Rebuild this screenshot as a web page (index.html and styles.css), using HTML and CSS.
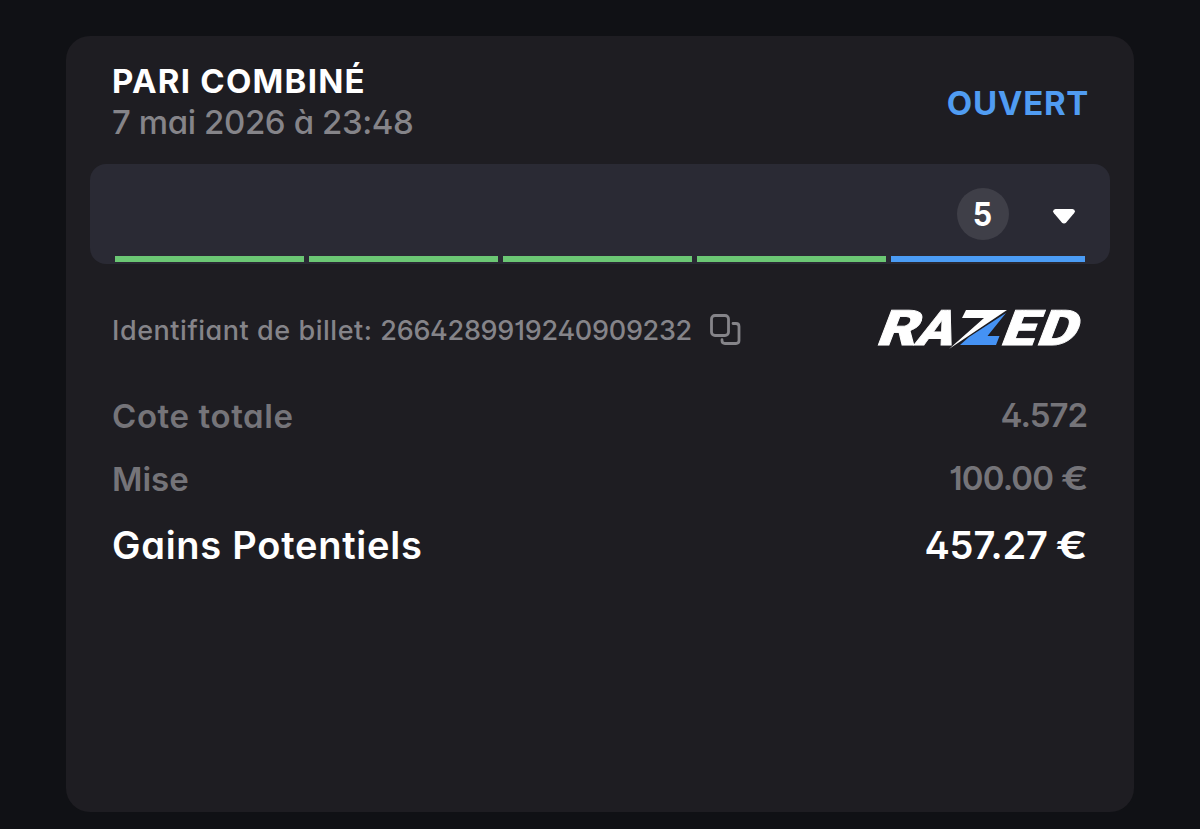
FILE: index.html
```html
<!DOCTYPE html>
<html lang="fr">
<head>
<meta charset="utf-8">
<title>Pari combiné</title>
<link rel="stylesheet" href="styles.css">
</head>
<body>
<main class="card">
  <header class="head">
    <div>
      <h1 class="title">PARI COMBINÉ</h1>
      <p class="date">7 mai 2026 à 23:48</p>
    </div>
    <div class="status">OUVERT</div>
  </header>
  <section class="panel">
    <div class="panel-row">
      <div class="count"><span class="count-num">5</span></div>
      <svg class="caret" width="24" height="17" viewBox="0 0 24 17"><path d="M3.500 1h17q3.800 1 1.500 4.300l-7.600 9q-2.400 2.400-4.800 0l-7.600-9q-2.300-3.300 1.500-4.300z"/></svg>
    </div>
    <div class="legs"><i class="leg"></i><i class="leg"></i><i class="leg"></i><i class="leg"></i><i class="leg open"></i></div>
  </section>
  <section class="ticket">
    <div class="ident">
      <p><span class="ident-label">Identifiant de billet: </span><span class="ident-num">2664289919240909232</span></p>
      <svg class="copy" width="34" height="34" viewBox="0 0 34 34"><rect x="2.500" y="2.500" width="17" height="20" rx="3.500"/><path d="M24 10.500h3q3 0 3 3v14q0 3-3 3H16q-3 0-3-3v-.8"/></svg>
    </div>
    <svg class="logo" width="212" height="50" viewBox="0 0 212 50" role="img" aria-label="RAZED">
      <g class="logo-text" transform="translate(0 40) skewX(-21)">
        <text x="1" y="0" textLength="40" lengthAdjust="spacingAndGlyphs">R</text>
        <text x="40" y="0" textLength="37" lengthAdjust="spacingAndGlyphs">A</text>
        <text x="125" y="0" textLength="34" lengthAdjust="spacingAndGlyphs">E</text>
        <text x="161" y="0" textLength="39" lengthAdjust="spacingAndGlyphs">D</text>
      </g>
      <path class="bolt" d="M92 5h41L75 44L110 13H88z"/>
      <path class="wedge" d="M132 8L113.500 31h12l-3.500 9H86l9-8z"/>
    </svg>
  </section>
  <dl class="totals">
    <div class="row"><dt class="wide">Cote totale</dt><dd>4.572</dd></div>
    <div class="row"><dt>Mise</dt><dd class="stake">100.00 <span class="euro">€</span></dd></div>
    <div class="row win"><dt>Gains Potentiels</dt><dd>457.27 <span class="euro">€</span></dd></div>
  </dl>
</main>
</body>
</html>
```
FILE: styles.css
```css
* { box-sizing: border-box; margin: 0; padding: 0; }
body {
  height: 829px;
  padding: 36px 66px 17px;
  background: #101115;
  color: #fff;
  font-family: Inter, "Liberation Sans", sans-serif;
  font-feature-settings: "cv11", "cv01", "cv02";
}
.card {
  height: 776px;
  padding: 24px;
  background: #1e1d22;
  border-radius: 24px;
}
.head {
  display: flex;
  justify-content: space-between;
  align-items: flex-start;
  height: 104px;
  padding: 0 22px;
}
.title { font-size: 33px; line-height: 42px; font-weight: 650; letter-spacing: 1.25px; }
.date { font-size: 33px; line-height: 40px; font-weight: 480; letter-spacing: -.4px; color: #858489; }
.status { padding-top: 22px; margin-right: -1px; font-size: 33px; line-height: 42px; font-weight: 650; letter-spacing: .7px; color: #509cf2; }
.panel {
  display: flex;
  flex-direction: column;
  justify-content: space-between;
  height: 100px;
  padding: 24px 24px 2px;
  background: #2a2a34;
  border-radius: 16px;
}
.panel-row { display: flex; justify-content: flex-end; align-items: center; gap: 43px; padding-right: 10px; }
.count {
  width: 52px;
  height: 52px;
  border-radius: 50%;
  background: #3f3f48;
  font-size: 33px;
  line-height: 53px;
  font-weight: 700;
  text-align: center;
}
.count-num { display: inline-block; transform: scaleX(.92); }
.caret { margin-top: 4px; fill: #fff; }
.legs { display: flex; height: 6px; padding-right: 1px; margin-left: .5px; }
.leg { flex: 1; margin-right: 5px; background: #6bc774; }
.leg.open { flex: 1 0 5px; margin-right: 0; background: #4b9cf5; }
.ticket {
  display: flex;
  justify-content: space-between;
  align-items: center;
  height: 132px;
  padding: 0 24px 0 22px;
}
.ident { display: flex; align-items: center; gap: 17px; font-size: 27px; font-weight: 480; color: #858489; }
.ident p { white-space: nowrap; }
.ident-label { letter-spacing: .54px; }
.ident-num { letter-spacing: -.28px; }
.copy { fill: none; stroke: #858489; stroke-width: 2.8; stroke-linecap: round; }
.logo { overflow: visible; }
.logo-text { fill: #fff; stroke: #fff; stroke-width: .8; font-family: Roboto, sans-serif; font-size: 49px; font-weight: 900; }
.bolt { fill: #fff; }
.wedge { fill: #4592f4; }
.totals { margin-top: -1px; padding: 0 22px; }
.row { display: flex; justify-content: space-between; height: 42px; margin-bottom: 21px; font-size: 33px; line-height: 42px; font-weight: 600; color: #757479; }
.row dt.wide { letter-spacing: .6px; }
.row dd { padding-right: 1px; letter-spacing: -1px; line-height: 40px; }
.row dd.stake { letter-spacing: -.9px; }
.euro { display: inline-block; margin-left: 5px; transform: scaleX(1.25); transform-origin: right; }
.row.win { height: 48px; font-size: 38px; line-height: 48px; font-weight: 640; color: #fff; }
.row.win dt { letter-spacing: .75px; }
.row.win dd { padding-right: 0; line-height: 48px; letter-spacing: -.1px; }
```
